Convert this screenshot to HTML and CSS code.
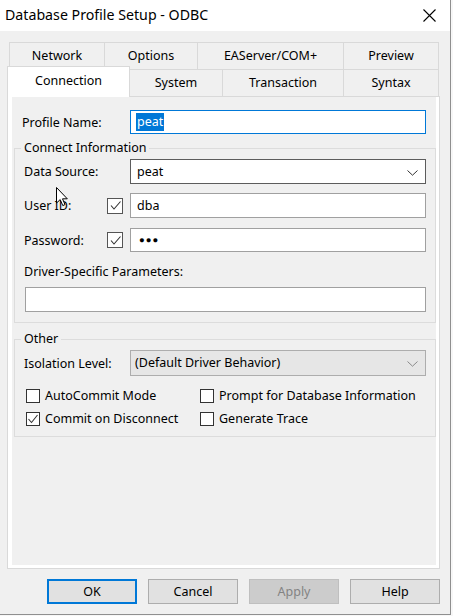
FILE: index.html
```html
<!DOCTYPE html>
<html>
<head>
<meta charset="utf-8">
<link rel="stylesheet" href="styles.css">
</head>
<body>
<div class="window">
  <div class="titlebar">
    <span class="title">Database Profile Setup - ODBC</span>
    <svg class="close" width="13" height="13" viewBox="0 0 13 13"><path d="M0.5 0.5 L12.5 12.5 M12.5 0.5 L0.5 12.5" stroke="#000" stroke-width="1.1" fill="none"/></svg>
  </div>
  <div class="content">
    <div class="tabrow back">
      <div class="tab w-network">Network</div>
      <div class="tab w-options">Options</div>
      <div class="tab w-eas">EAServer/COM+</div>
      <div class="tab w-preview">Preview</div>
    </div>
    <div class="tabrow front">
      <div class="tab selected w-connection">Connection</div>
      <div class="tab w-system">System</div>
      <div class="tab w-transaction">Transaction</div>
      <div class="tab w-syntax">Syntax</div>
    </div>
    <div class="panel">
      <div class="page">
        <div class="row profile">
          <label class="lbl lbl-profile">Profile Name:</label>
          <div class="field focused"><span class="sel">peat</span></div>
        </div>

        <fieldset class="group connect">
          <legend>Connect Information</legend>
          <div class="row r-ds">
            <label class="lbl">Data Source:</label>
            <div class="field combo dark"><span>peat</span>
              <svg class="chev" width="11" height="6" viewBox="0 0 11 6"><polyline points="0.5,0.5 5.5,5.2 10.5,0.5" fill="none" stroke="#333" stroke-width="1"/></svg>
            </div>
          </div>
          <div class="row r-uid">
            <label class="lbl short">User ID:</label>
            <span class="cb big checked"><svg width="13" height="13" viewBox="0 0 13 13"><polyline points="2,6.5 5,10 11.5,2.5" fill="none" stroke="#333" stroke-width="1.1"/></svg></span>
            <div class="field plain"><span>dba</span></div>
          </div>
          <div class="row r-pwd">
            <label class="lbl short">Password:</label>
            <span class="cb big checked"><svg width="13" height="13" viewBox="0 0 13 13"><polyline points="2,6.5 5,10 11.5,2.5" fill="none" stroke="#333" stroke-width="1.1"/></svg></span>
            <div class="field plain"><span class="dots">●●●</span></div>
          </div>
          <div class="dsp-label">Driver-Specific Parameters:</div>
          <div class="field plain wide"></div>
        </fieldset>

        <fieldset class="group other">
          <legend>Other</legend>
          <div class="row r-iso">
            <label class="lbl">Isolation Level:</label>
            <div class="field combo disabled"><span>(Default Driver Behavior)</span>
              <svg class="chev" width="11" height="6" viewBox="0 0 11 6"><polyline points="0.5,0.5 5.5,5.2 10.5,0.5" fill="none" stroke="#8a8a8a" stroke-width="1"/></svg>
            </div>
          </div>
          <div class="checks">
            <div class="check"><span class="cb"></span>AutoCommit Mode</div>
            <div class="check"><span class="cb"></span>Prompt for Database Information</div>
            <div class="check"><span class="cb checked"><svg width="12" height="12" viewBox="0 0 12 12"><polyline points="1.5,6 4.5,9.5 10.5,2" fill="none" stroke="#333" stroke-width="1.1"/></svg></span>Commit on Disconnect</div>
            <div class="check"><span class="cb"></span>Generate Trace</div>
          </div>
        </fieldset>

        <svg class="cursor" width="13" height="20" viewBox="0 0 13 20"><path d="M0.5 0.5 L0.5 16 L4.2 12.6 L6.8 18.6 L9 17.6 L6.5 11.8 L11.3 11.8 Z" fill="#fff" stroke="#000" stroke-width="1" stroke-linejoin="miter"/></svg>
      </div>
    </div>
    <div class="buttons">
      <button class="btn default">OK</button>
      <button class="btn">Cancel</button>
      <button class="btn disabled">Apply</button>
      <button class="btn">Help</button>
    </div>
  </div>
</div>
</body>
</html>
```
FILE: styles.css
```css
* { box-sizing: border-box; }
body {
  margin: 0;
  width: 453px;
  height: 616px;
  overflow: hidden;
  background: #f7f7f7;
  font-family: "Noto Sans", "Open Sans", sans-serif;
  font-size: 12.5px;
  color: #000;
}
.window {
  width: 451px;
  height: 615px;
  background: #f0f0f0;
  border-right: 1px solid #8f8f8f;
  border-bottom: 1px solid #8f8f8f;
  display: flex;
  flex-direction: column;
}
.titlebar {
  height: 31px;
  background: #fff;
  display: flex;
  align-items: center;
  justify-content: space-between;
  padding: 0 14px 0 5px;
  flex: none;
}
.title { font-size: 14.2px; line-height: 18px; padding-bottom: 1px; }
.close { display: block; }

.content { padding: 11px 0 0 7px; }

.tabrow { display: flex; height: 27px; }
.tabrow.back { margin-left: 2px; }
.tab {
  height: 27px;
  background: #f0f0f0;
  border: 1px solid #d9d9d9;
  border-bottom: none;
  display: flex;
  align-items: center;
  justify-content: center;
  margin-left: -1px;
  line-height: 16px;
}
.tab:first-child { margin-left: 0; }
.tab.selected {
  background: #fff;
  height: 31px;
  margin-top: -3px;
  position: relative;
  z-index: 2;
  padding: 0 0 3px 0;
}
.w-network { width: 96px; }
.w-options { width: 94px; }
.w-eas { width: 147px; }
.w-preview { width: 96px; }
.w-connection { width: 123px; }
.w-system { width: 94px; }
.w-transaction { width: 122px; }
.w-syntax { width: 96px; }

.panel {
  width: 433px;
  height: 473px;
  background: #fff;
  border: 1px solid #d9d9d9;
  padding: 0 3px 3px 4px;
  display: flex;
}
.page {
  flex: 1;
  background: #f0f0f0;
  position: relative;
  padding: 13px 0 0 2px;
}

.row { display: flex; align-items: center; }
.lbl { width: 106px; flex: none; line-height: 16px; padding-top: 1px; }
.profile { padding-left: 8px; }
.lbl-profile { width: 108px; }

.field {
  height: 25px;
  width: 296px;
  background: #fff;
  border: 1px solid #7a7a7a;
  display: flex;
  align-items: center;
  padding-left: 6px;
  line-height: 16px;
}
.field.focused { border-color: #0078d7; height: 24px; padding-left: 5px; }
.sel { background: #0078d7; color: #fff; padding: 1px 1px; line-height: 16px; }
.field.dark { border-color: #5c5c5c; }
.field.plain { border-color: #a0a0a0; }
.field.combo { position: relative; }
.chev { position: absolute; right: 7px; top: 10px; }
.field.disabled { background: #e6e6e6; border-color: #adadad; padding-left: 4px; height: 26px; }

.group {
  margin: 6px 0 0 0;
  width: 422px;
  border: 1px solid #dcdcdc;
  padding: 0 9px 10px 9px;
  min-width: 0;
}
.group legend {
  padding: 0 3px;
  margin-left: -3px;
  line-height: 16px;
}
.r-ds { margin-top: 3px; }
.r-uid { margin-top: 9px; }
.r-pwd { margin-top: 10px; }
.r-pwd .field { height: 24px; }
.lbl.short { width: 83px; }
.cb {
  width: 14px;
  height: 14px;
  border: 1px solid #333;
  background: #fff;
  flex: none;
  display: flex;
  align-items: center;
  justify-content: center;
}
.cb.big { width: 16px; height: 16px; border-color: #555; margin-right: 7px; }
.dots { font-size: 9.5px; letter-spacing: 1px; padding-left: 2px; }
.dsp-label { margin-top: 12px; line-height: 16px; }
.field.wide { width: 401px; margin: 7px 0 0 1px; }

.group.other { margin-top: 8px; padding-bottom: 9px; }
.r-iso { margin-top: 3px; }
.checks {
  display: grid;
  grid-template-columns: 174px 1fr;
  row-gap: 7px;
  margin: 12px 0 0 2px;
}
.check { display: flex; align-items: center; line-height: 16px; }
.check .cb { margin-right: 5px; }

.cursor { position: absolute; left: 44px; top: 90px; }

.buttons {
  display: flex;
  gap: 11px;
  margin: 10px 0 0 40px;
}
.btn {
  width: 90px;
  height: 25px;
  background: #e1e1e1;
  border: 1px solid #adadad;
  font-family: inherit;
  font-size: 12.5px;
  color: #000;
  padding: 0;
  line-height: 16px;
}
.btn.default { border: 2px solid #0078d7; }
.btn.disabled { background: #cccccc; border-color: #bfbfbf; color: #838383; }
```
